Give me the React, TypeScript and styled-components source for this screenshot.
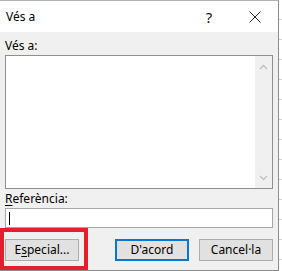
import styled, { createGlobalStyle } from 'styled-components';

const GlobalStyle = createGlobalStyle`
  html, body {
    margin: 0;
    padding: 0;
    background: #ffffff;
  }
  body {
    font-family: "Noto Sans", "Segoe UI", sans-serif;
    font-size: 12px;
    color: #000;
  }
`;

const Screen = styled.div`
  display: flex;
  width: 282px;
  height: 271px;
  overflow: hidden;
`;

const Dialog = styled.div`
  position: relative;
  width: 279px;
  height: 271px;
  box-sizing: border-box;
  border-top: 1px solid #b4b4b4;
  border-right: 1px solid #8c8c8c;
  border-bottom: 1px solid #8c8c8c;
  background: #f0f0f0;
  display: flex;
  flex-direction: column;
`;

const Sheet = styled.div`
  flex: 1;
  background: repeating-linear-gradient(
    to bottom,
    #ffffff 0,
    #ffffff 19px,
    #d4d4d4 19px,
    #d4d4d4 20px
  );
`;

const TitleBar = styled.div`
  height: 31px;
  background: #ffffff;
  display: flex;
  align-items: center;
`;

const Title = styled.div`
  flex: 1;
  padding-left: 6px;
  font-size: 12px;
  line-height: 16px;
  margin-top: 1px;
`;

const TitleButton = styled.div`
  width: 46px;
  height: 31px;
  display: flex;
  align-items: center;
  justify-content: center;
  font-size: 15px;
  color: #111;
`;

const Body = styled.div`
  flex: 1;
  display: flex;
  flex-direction: column;
  padding: 6px 5px 0 5px;
`;

const Label = styled.div<{ $top?: number }>`
  line-height: 16px;
  height: 16px;
  margin-top: ${({ $top }) => $top ?? 0}px;
  margin-bottom: 1px;
`;

const Key = styled.span`
  text-decoration: underline;
  text-underline-offset: 2px;
`;

const ListBox = styled.div`
  height: 134px;
  box-sizing: border-box;
  border: 1px solid #8f8f8f;
  background: #ffffff;
  display: flex;
  justify-content: flex-end;
`;

const ScrollBar = styled.div`
  width: 17px;
  background: #f0f0f0;
  display: flex;
  flex-direction: column;
  justify-content: space-between;
  align-items: center;
  padding: 8px 0 7px;
`;

const TextInput = styled.div`
  height: 20px;
  box-sizing: border-box;
  border: 1px solid #a6a6a6;
  background: #ffffff;
  display: flex;
  align-items: center;
  padding-left: 3px;
`;

const Caret = styled.span`
  width: 1px;
  height: 13px;
  background: #000;
`;

const ButtonRow = styled.div`
  display: flex;
  gap: 10px;
  margin-top: 11px;
`;

const Spacer = styled.div`
  flex: 1;
`;

const Button = styled.div<{ $default?: boolean }>`
  width: 74px;
  height: 22px;
  box-sizing: border-box;
  border: ${({ $default }) => ($default ? '2px solid #0078d7' : '1px solid #adadad')};
  background: #e1e1e1;
  display: flex;
  align-items: center;
  justify-content: center;
  line-height: 16px;
`;

const Highlight = styled.div`
  position: absolute;
  left: 0;
  top: 227px;
  width: 88px;
  height: 42px;
  box-sizing: border-box;
  border: 4px solid #e2202c;
`;

function Chevron({ up }: { up?: boolean }) {
  return (
    <svg width="9" height="6" viewBox="0 0 9 6">
      <path
        d={up ? 'M1 5 L4.5 1.5 L8 5' : 'M1 1 L4.5 4.5 L8 1'}
        fill="none"
        stroke="#bfbfbf"
        strokeWidth="1.3"
      />
    </svg>
  );
}

export default function App() {
  return (
    <Screen>
      <GlobalStyle />
      <Dialog>
        <TitleBar>
          <Title>Vés a</Title>
          <TitleButton>?</TitleButton>
          <TitleButton>
            <svg width="12" height="12" viewBox="0 0 12 12">
              <path d="M0.5 0.5 L11.5 11.5 M11.5 0.5 L0.5 11.5" stroke="#111" strokeWidth="0.9" />
            </svg>
          </TitleButton>
        </TitleBar>
        <Body>
          <Label>Vés a:</Label>
          <ListBox>
            <ScrollBar>
              <Chevron up />
              <Chevron />
            </ScrollBar>
          </ListBox>
          <Label $top={2}>
            <Key>R</Key>eferència:
          </Label>
          <TextInput>
            <Caret />
          </TextInput>
          <ButtonRow>
            <Button>
              E<Key>s</Key>pecial...
            </Button>
            <Spacer />
            <Button $default>D'acord</Button>
            <Button>Cancel·la</Button>
          </ButtonRow>
        </Body>
        <Highlight />
      </Dialog>
      <Sheet />
    </Screen>
  );
}
